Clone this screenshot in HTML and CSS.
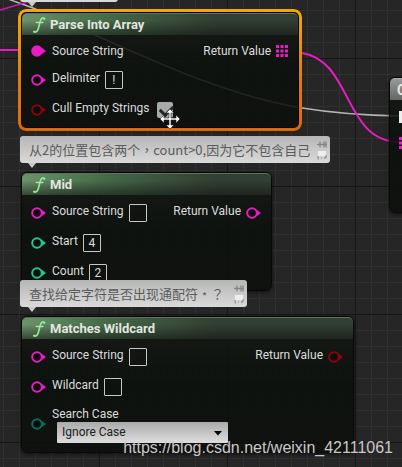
FILE: index.html
```html
<!DOCTYPE html>
<html lang="en">
<head>
<meta charset="utf-8">
<title>Blueprint graph</title>
<link rel="stylesheet" href="styles.css">
</head>
<body>
<svg class="defs" width="0" height="0" aria-hidden="true">
  <symbol id="pin" viewBox="0 0 16 14"><circle cx="6" cy="7" r="4.8" fill="#090b09" fill-opacity=".6" stroke="currentColor" stroke-width="2"/><path d="M11 4l4 3-4 3z" fill="currentColor"/></symbol>
  <symbol id="pin-full" viewBox="0 0 16 14"><circle cx="6" cy="7" r="5.8" fill="currentColor"/><path d="M11 4l4 3-4 3z" fill="currentColor"/></symbol>
  <symbol id="pin-array" viewBox="0 0 12 12"><path d="M0 0h3v3H0zM4.5 0h3v3h-3zM9 0h3v3H9zM0 4.500h3v3H0zM4.500 4.500h3v3h-3zM9 4.500h3v3H9zM0 9h3v3H0zM4.500 9h3v3h-3zM9 9h3v3H9z" fill="currentColor"/></symbol>
  <symbol id="fn" viewBox="0 0 14 18"><path d="M12.500 2.800C11.600 1.300 9.600 1.600 8.700 4 7.900 6.200 7.300 9.200 6.500 12 5.700 14.800 4.300 16.800 2 15.800M4.400 6.500h6.400" fill="none" stroke="currentColor" stroke-width="1.600" stroke-linecap="round"/><circle cx="12.200" cy="2.800" r="1.100" fill="currentColor"/><circle cx="2.200" cy="15.600" r="1.100" fill="currentColor"/></symbol>
  <symbol id="tack" viewBox="0 0 10 8"><path d="M0 4h3M3 1v6M3 4h4M7 1v6M9 1v6M7 4h3" fill="none" stroke="currentColor" stroke-width="1.300"/></symbol>
  <symbol id="bubble" viewBox="0 0 10 9"><path d="M1 0h8v5H1z" fill="#eee"/><path d="M1 5v3h1M4 7h1M7 7h2V4" fill="none" stroke="currentColor" stroke-width="1"/></symbol>
</svg>
<main class="graph">
  <svg class="wires" width="402" height="160" fill="none" aria-hidden="true">
    <path d="M8-1L33 8Q60 20 95 35C160 64 230 96 302 108Q345 115 400 116" stroke="#b5b5b5" stroke-width="1.500"/>
    <path d="M0 10L34 0" stroke="#cf1cae" stroke-width="1.500"/>
    <path d="M0 50H20" stroke="#e81bc4" stroke-width="2"/>
    <path d="M302 53C353 61 343 142 400 142" stroke="#e81bc4" stroke-width="2"/>
  </svg>

  <div class="comment cut"></div>

  <section class="node parse selected">
    <h2 class="title"><svg class="fn"><use href="#fn"/></svg>Parse Into Array</h2>
    <div class="pins">
      <div class="inputs">
        <div class="row first"><svg class="pin string"><use href="#pin-full"/></svg><span class="label">Source String</span></div>
        <div class="row"><svg class="pin string"><use href="#pin"/></svg><label class="label" for="delimiter">Delimiter</label><input class="field" id="delimiter" value="!"></div>
        <div class="row"><svg class="pin bool"><use href="#pin"/></svg><label class="label" for="cull">Cull Empty Strings</label><input class="check" id="cull" type="checkbox" checked></div>
      </div>
      <div class="row out first"><span class="label">Return Value</span><svg class="array string"><use href="#pin-array"/></svg></div>
    </div>
  </section>

  <section class="node mid">
    <h2 class="title"><svg class="fn"><use href="#fn"/></svg>Mid</h2>
    <div class="pins">
      <div class="inputs">
        <div class="row"><svg class="pin string"><use href="#pin"/></svg><label class="label" for="mid-source">Source String</label><input class="field" id="mid-source"></div>
        <div class="row"><svg class="pin int"><use href="#pin"/></svg><label class="label" for="start">Start</label><input class="field" id="start" value="4"></div>
        <div class="row"><svg class="pin int"><use href="#pin"/></svg><label class="label" for="count">Count</label><input class="field" id="count" value="2"></div>
      </div>
      <div class="row out"><span class="label">Return Value</span><svg class="pin string"><use href="#pin"/></svg></div>
    </div>
  </section>

  <section class="node wildcard">
    <h2 class="title"><svg class="fn"><use href="#fn"/></svg>Matches Wildcard</h2>
    <div class="pins">
      <div class="inputs">
        <div class="row"><svg class="pin string"><use href="#pin"/></svg><label class="label" for="wild-source">Source String</label><input class="field" id="wild-source"></div>
        <div class="row"><svg class="pin string"><use href="#pin"/></svg><label class="label" for="wild">Wildcard</label><input class="field" id="wild"></div>
        <div class="row case"><svg class="pin enum"><use href="#pin"/></svg>
          <div class="stack"><label for="case">Search Case</label>
            <div class="picker"><select id="case"><option>Ignore Case</option><option>Case Sensitive</option></select><svg class="caret" viewBox="0 0 8 5"><path d="M0 0h8L4 4.500z"/></svg></div>
          </div>
        </div>
      </div>
      <div class="row out"><span class="label">Return Value</span><svg class="pin bool"><use href="#pin"/></svg></div>
    </div>
  </section>

  <section class="node next">
    <h2 class="title">C</h2>
    <div class="next-pins"><svg class="exec" viewBox="0 0 12 12"><path d="M0 0h6l6 6-6 6H0z" fill="#eee"/></svg><svg class="array string"><use href="#pin-array"/></svg></div>
  </section>

  <div class="comment first-note"><span>从2的位置包含两个<span class="mark">，</span>count&gt;0,因为它不包含自己</span><div class="tools"><svg><use href="#tack"/></svg><svg><use href="#bubble"/></svg></div></div>
  <div class="comment second-note"><span>查找给定字符是否出现通配符<span class="mark">﹡？</span></span><div class="tools"><svg><use href="#tack"/></svg><svg><use href="#bubble"/></svg></div></div>

  <svg class="cursor" viewBox="0 0 22 22" aria-hidden="true"><path d="M11 1l4 4h-3v5h5V7l4 4-4 4v-3h-5v5h3l-4 4-4-4h3v-5H5v3l-4-4 4-4v3h5V5H7z" fill="#fff" stroke="#222" stroke-width=".6"/></svg>
  <p class="watermark">https://blog.csdn.net/weixin_42111061</p>
</main>
</body>
</html>
```
FILE: styles.css
```css
* { box-sizing: border-box; }

body {
  margin: 0;
  background: #262626;
  color: #dcdcdc;
  font: 12px/16px Roboto, "Noto Sans CJK SC", sans-serif;
}

.graph {
  position: relative;
  min-height: 100vh;
  overflow: hidden;
  background-color: #262626;
  background-image:
    linear-gradient(90deg, #171717 1px, transparent 1px),
    linear-gradient(#171717 1px, transparent 1px),
    linear-gradient(90deg, #303030 1px, transparent 1px),
    linear-gradient(#303030 1px, transparent 1px);
  background-size: 128px 128px, 128px 128px, 16px 16px, 16px 16px;
  background-position: 99px 0, 0 58px, 3px 0, 0 10px;
}

.defs, .wires { position: absolute; left: 0; top: 0; }

.node {
  position: absolute;
  border: 1px solid #070907;
  border-radius: 6px;
  background: linear-gradient(rgba(20, 23, 19, .86), rgba(10, 15, 11, .86) 50%, rgba(13, 15, 13, .9));
  box-shadow: 0 1px 4px #0009;
}
.parse { left: 21px; top: 12px; width: 278px; height: 116px; }
.mid { left: 21px; top: 172px; width: 251px; height: 119px; }
.wildcard { left: 21px; top: 316px; width: 333px; height: 137px; }
.next { left: 389px; top: 77px; width: 160px; height: 136px; }

.selected::before {
  content: "";
  position: absolute;
  inset: -4px;
  border: 3px solid transparent;
  border-radius: 8px;
  background: linear-gradient(#f2a900, #e27b0a 60%, #dd690a) border-box;
  mask: linear-gradient(#000 0 0) padding-box, linear-gradient(#000 0 0);
  mask-composite: exclude;
}

.title {
  display: flex;
  align-items: center;
  gap: 4px;
  height: 22px;
  margin: 0;
  padding-left: 10px;
  border-top: 1px solid #57775a;
  border-radius: 5px 5px 0 0;
  background:
    linear-gradient(transparent 30%, #12151299),
    linear-gradient(90deg, #6d936d, #517a53 50px, #426244 100px, #333f33 190px);
  color: #e2e6e0;
  font-size: 13px;
  font-weight: 700;
  line-height: 20px;
}
.fn { width: 14px; height: 18px; color: #9bea9b; }

.next .title {
  padding-left: 7px;
  border-color: #aaa;
  background: linear-gradient(#999, #666);
  font-size: 14px;
}
.next-pins { display: grid; gap: 14px; padding: 11px 9px; }
.exec { width: 12px; height: 12px; }

.pins {
  display: flex;
  justify-content: space-between;
  align-items: flex-start;
  padding: 3px 9px;
}
.row { display: flex; align-items: center; height: 30px; }
.row.first { height: 28px; }
.parse .pins { padding-top: 2px; }
.label { padding-bottom: 4px; }
.first .label { padding-bottom: 0; }
.pin { width: 16px; height: 14px; margin-right: 5px; }
.out .pin { margin: 0 0 0 5px; }
.array { width: 12px; height: 12px; }
.out .array { margin: 0 1px 0 5px; }

.string { color: #e81bc4; }
.bool { color: #8b0510; }
.int { color: #22c596; }
.enum { color: #0b6b57; }

.field {
  width: 18px;
  height: 18px;
  margin-left: 5px;
  padding: 0;
  border: 1px solid #c6c6c6;
  border-radius: 1px;
  background: transparent;
  color: #dcdcdc;
  font: inherit;
  text-align: center;
}
.check {
  appearance: none;
  width: 16px;
  height: 16px;
  margin: 0 0 0 7px;
  border-radius: 2px;
  background: #a9a9a9;
}
.check::before {
  content: "";
  display: block;
  width: 10px;
  height: 6px;
  margin: 3px;
  border: solid #252525;
  border-width: 0 0 3px 3px;
  transform: rotate(-45deg);
}

.row.case { height: 44px; }
.stack label { display: block; }
.picker { position: relative; margin-left: 5px; }
.picker select {
  display: block;
  appearance: none;
  width: 171px;
  height: 21px;
  padding: 0 5px;
  border: 0;
  border-radius: 1px;
  background: linear-gradient(#aaa, #dedede);
  color: #222;
  font: inherit;
}
.caret { position: absolute; right: 6px; top: 9px; width: 8px; height: 5px; }

.comment {
  position: absolute;
  display: flex;
  justify-content: space-between;
  align-items: center;
  height: 27px;
  padding: 0 3px 0 9px;
  border-radius: 3px;
  background: linear-gradient(#b6b6b6, #dadada);
  color: #5b5b5b;
  font: 13px/20px "Noto Sans CJK SC", sans-serif;
  white-space: nowrap;
}
.comment::after {
  content: "";
  position: absolute;
  left: 8px;
  top: 100%;
  border: solid transparent;
  border-width: 5px 4px 0;
  border-top-color: #c9c9c9;
}
.mark { font-family: "Noto Sans CJK TC", sans-serif; }
.cut { left: 20px; top: -25px; width: 98px; }
.first-note { left: 20px; top: 136px; width: 310px; }
.second-note { left: 20px; top: 280px; width: 227px; }
.tools { display: grid; gap: 2px; color: #858585; }
.tools svg { width: 10px; height: 9px; }

.cursor { position: absolute; left: 159px; top: 108px; width: 22px; height: 22px; }

.watermark {
  position: absolute;
  right: 9px;
  bottom: 9px;
  margin: 0;
  color: #c8c8c8;
  font: 16px/20px "Liberation Sans", sans-serif;
}
```
